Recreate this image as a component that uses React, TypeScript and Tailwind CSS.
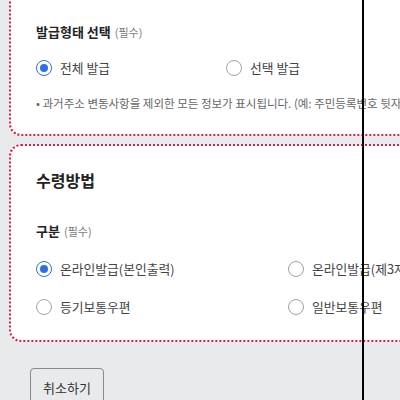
import React from "react";

const RED = "border-[#e8173f]";

function Radio({ checked, label }: { checked?: boolean; label: string }) {
  return (
    <label className="flex h-5 items-center gap-2 whitespace-nowrap">
      {checked ? (
        <span className="grid h-4 w-4 place-items-center rounded-full border border-[#2f6fe4] bg-white">
          <span className="h-2 w-2 rounded-full bg-[#2f6fe4]" />
        </span>
      ) : (
        <span className="h-4 w-4 rounded-full border-[1.5px] border-[#a3a3a3] bg-white" />
      )}
      <span className="text-[12.8px] text-[#444]">{label}</span>
    </label>
  );
}

export default function App() {
  return (
    <div className="relative h-[400px] w-[400px] overflow-hidden bg-[#e9eaec] font-['Noto_Sans_CJK_KR',sans-serif]">
      <div className="-mt-[20px] ml-[9px] w-[620px]">
        {/* 발급형태 */}
        <section className={`rounded-[12px] border-2 border-dotted ${RED} bg-white px-[25px] pb-[23px] pt-[40px]`}>
          <div className="flex h-5 items-center gap-1">
            <h3 className="text-[13px] font-bold text-[#222]">발급형태 선택</h3>
            <span className="text-[11px] text-[#777]">(필수)</span>
          </div>
          <div className="mt-4 flex">
            <div className="w-[190px]">
              <Radio checked label="전체 발급" />
            </div>
            <Radio label="선택 발급" />
          </div>
          <p className="mt-[17px] h-4 whitespace-nowrap text-[11.5px] leading-4 text-[#666]">
            • 과거주소 변동사항을 제외한 모든 정보가 표시됩니다. (예: 주민등록번호 뒷자리, 세대원 정보 등)
          </p>
        </section>

        {/* 수령방법 */}
        <section className={`mt-2 rounded-[12px] border-2 border-dotted ${RED} bg-white px-[25px] pb-[23px] pt-[22px]`}>
          <h2 className="h-6 text-[16px] font-bold leading-6 text-[#222]">수령방법</h2>
          <div className="mt-[29px] flex h-5 items-center gap-1">
            <h3 className="text-[13px] font-bold text-[#222]">구분</h3>
            <span className="text-[11px] text-[#777]">(필수)</span>
          </div>
          <div className="mt-[18px] grid grid-cols-[252px_252px] gap-y-[18px]">
            <Radio checked label="온라인발급(본인출력)" />
            <Radio label="온라인발급(제3자출력)" />
            <Radio label="등기보통우편" />
            <Radio label="일반보통우편" />
          </div>
        </section>

        <button className="ml-[21px] mt-[26px] h-10 w-[74px] rounded-[4px] border border-[#8a8a8a] text-[13px] text-[#333]">
          취소하기
        </button>
      </div>

      <div className="absolute bottom-0 left-[362px] top-0 w-[2px] bg-black" />
    </div>
  );
}
